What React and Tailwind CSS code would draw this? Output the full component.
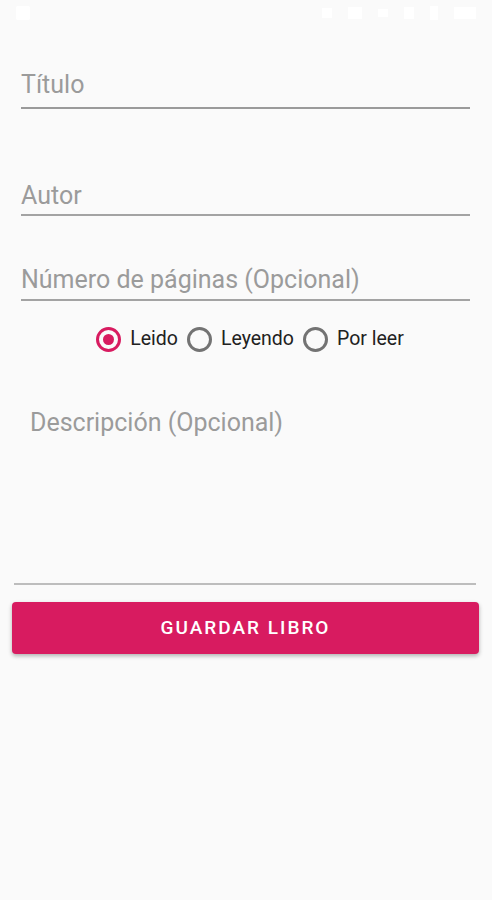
export default function App() {
  const font = { fontFamily: "Roboto, 'Noto Sans', sans-serif" };
  return (
    <div className="min-h-[900px] w-[492px] bg-[#fafafa]" style={font}>
      {/* status bar (white icons on light bg) */}
      <div className="flex h-[26px] items-center justify-between px-[16px] text-white">
        <div className="h-[14px] w-[14px] rounded-[2px] bg-white" />
        <div className="flex items-center gap-[16px]">
          <div className="h-[10px] w-[10px] bg-white" />
          <div className="h-[12px] w-[14px] bg-white" />
          <div className="h-[8px] w-[10px] bg-white" />
          <div className="h-[12px] w-[10px] bg-white" />
          <div className="h-[14px] w-[8px] bg-white" />
          <div className="h-[12px] w-[22px] bg-white" />
        </div>
      </div>

      <div className="flex flex-col">
        <div className="ml-[21px] mr-[22px] mt-[44px] border-b-2 border-[#9a9a9a] pb-[7px] text-[25px] leading-[30px] text-[#9b9b9b]">
          Título
        </div>
        <div className="ml-[21px] mr-[22px] mt-[72px] border-b-2 border-[#a3a3a3] pb-[3px] text-[25px] leading-[30px] text-[#9b9b9b]">
          Autor
        </div>
        <div className="ml-[21px] mr-[22px] mt-[49px] border-b-2 border-[#a3a3a3] pb-[4px] text-[25px] leading-[30px] text-[#9b9b9b]">
          Número de páginas (Opcional)
        </div>

        <div className="mt-[25px] flex items-center justify-center pl-[8px] text-[19.5px] leading-[26px] text-[#212121]">
          <div className="flex items-center">
            <div className="flex h-[25px] w-[25px] items-center justify-center rounded-full border-[3px] border-[#d81b60]">
              <div className="h-[11px] w-[11px] rounded-full bg-[#d81b60]" />
            </div>
            <span className="ml-[9px]">Leido</span>
          </div>
          <div className="ml-[9px] flex items-center">
            <div className="h-[25px] w-[25px] rounded-full border-[3px] border-[#737373]" />
            <span className="ml-[9px]">Leyendo</span>
          </div>
          <div className="ml-[9px] flex items-center">
            <div className="h-[25px] w-[25px] rounded-full border-[3px] border-[#737373]" />
            <span className="ml-[9px]">Por leer</span>
          </div>
        </div>

        <div className="ml-[14px] mr-[16px] mt-[56px] h-[177px] border-b-2 border-[#bdbdbd] pl-[16px] text-[25px] leading-[30px] text-[#9b9b9b]">
          Descripción (Opcional)
        </div>

        <div className="ml-[12px] mr-[13px] mt-[17px] flex h-[52px] items-center justify-center rounded-[4px] bg-[#d81b60] text-[19px] font-medium tracking-[2px] text-white shadow-[0_2px_4px_rgba(0,0,0,0.3)]">
          GUARDAR LIBRO
        </div>
      </div>
    </div>
  );
}
